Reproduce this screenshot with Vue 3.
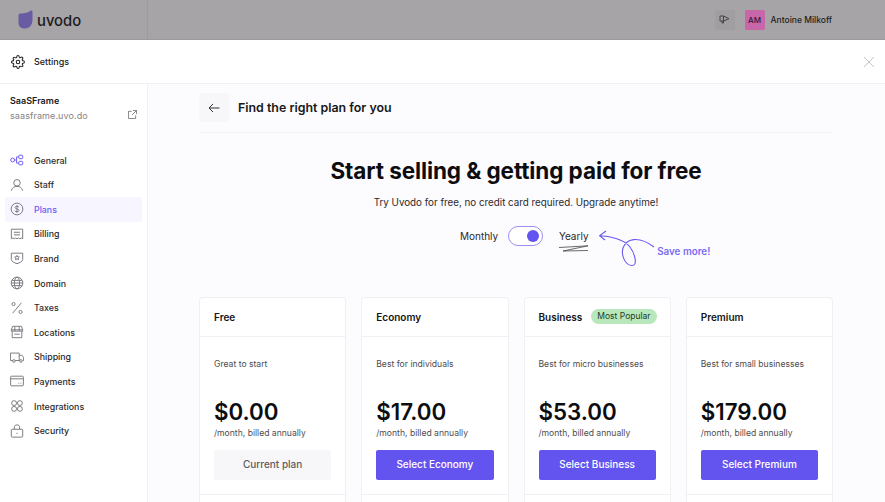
<template>
  <div class="page">
    <header class="topbar">
      <div class="brand">
        <svg width="15" height="19" viewBox="0 0 15 19"><path d="M.5 5.500C.5 4 1.500 3.500 3 3.500 7 3.500 10 2.500 12.500.8 13.500.2 14.500.5 14.500 2V10C14.500 15 11 18.500 7 18.500 3 18.500.5 16.500.5 13Z" fill="#6a5ca3" /></svg>
        <span class="brand-name">uvodo</span>
      </div>
      <div class="top-right">
        <div class="announce">
          <svg width="11" height="9" viewBox="0 0 11 9" fill="none" stroke="#47454a" stroke-width="1"><path d="M1 1h3.500l5.500 2.700-5.500 2.300H1zM3 6v2h1.500V6M4.500 1v5" /></svg>
        </div>
        <div class="avatar">AM</div>
        <span class="user">Antoine Milkoff</span>
      </div>
    </header>

    <div class="settings-head">
      <svg class="gear" width="14" height="14" viewBox="0 0 24 24" fill="none" stroke="#222" stroke-width="1.800"><circle cx="12" cy="12" r="3" /><path d="M19.400 15a1.650 1.650 0 0 0 .33 1.820l.06.06a2 2 0 0 1 0 2.830 2 2 0 0 1-2.830 0l-.06-.06a1.650 1.650 0 0 0-1.820-.33 1.650 1.650 0 0 0-1 1.510V21a2 2 0 0 1-2 2 2 2 0 0 1-2-2v-.09A1.650 1.650 0 0 0 9 19.400a1.650 1.650 0 0 0-1.820.33l-.06.06a2 2 0 0 1-2.830 0 2 2 0 0 1 0-2.830l.06-.06a1.650 1.650 0 0 0 .33-1.820 1.650 1.650 0 0 0-1.510-1H3a2 2 0 0 1-2-2 2 2 0 0 1 2-2h.09A1.650 1.650 0 0 0 4.600 9a1.650 1.650 0 0 0-.33-1.820l-.06-.06a2 2 0 0 1 0-2.830 2 2 0 0 1 2.830 0l.06.06a1.650 1.650 0 0 0 1.820.33H9a1.650 1.650 0 0 0 1-1.510V3a2 2 0 0 1 2-2 2 2 0 0 1 2 2v.09a1.650 1.650 0 0 0 1 1.510 1.650 1.650 0 0 0 1.820-.33l.06-.06a2 2 0 0 1 2.830 0 2 2 0 0 1 0 2.830l-.06.06a1.650 1.650 0 0 0-.33 1.820V9a1.650 1.650 0 0 0 1.510 1H21a2 2 0 0 1 2 2 2 2 0 0 1-2 2h-.09a1.650 1.650 0 0 0-1.510 1z" /></svg>
      <span class="settings-title">Settings</span>
      <svg class="close" width="10" height="10" viewBox="0 0 10 10" stroke="#c4c4c6" stroke-width="1"><path d="M0 0 10 10M10 0 0 10" /></svg>
    </div>

    <div class="body">
      <aside class="sidebar">
        <div class="site">
          <div>
            <div class="site-name">SaaSFrame</div>
            <div class="site-url">saasframe.uvo.do</div>
          </div>
          <svg class="site-link" width="9" height="9" viewBox="0 0 10 10" fill="none" stroke="#6b696f" stroke-width=".9"><path d="M4 1.500H.5v8h8V6M5.500.5h4v4M9.500.5 4.500 5.500" /></svg>
        </div>
        <nav class="nav">
          <a v-for="item in nav" :key="item.label" class="nav-item" :class="{ active: item.label === 'Plans' }">
            <svg width="14" height="14" viewBox="0 0 16 16" fill="none" :stroke="item.label === 'General' ? '#6a5af0' : '#7b797f'" stroke-width="1.100" v-html="item.icon"></svg>
            <span>{{ item.label }}</span>
          </a>
        </nav>
      </aside>

      <main class="main">
        <div class="plan-head">
          <button class="back">
            <svg width="12" height="10" viewBox="0 0 13 11" fill="none" stroke="#333" stroke-width="1.100"><path d="M12.500 5.500H1M5.500 1 1 5.500 5.500 10" /></svg>
          </button>
          <h2>Find the right plan for you</h2>
        </div>

        <section class="hero">
          <h1>Start selling &amp; getting paid for free</h1>
          <p>Try Uvodo for free, no credit card required. Upgrade anytime!</p>
          <div class="billing">
            <span class="opt">Monthly</span>
            <div class="toggle"><i></i></div>
            <div class="yearly">
              <span class="opt">Yearly</span>
              <svg width="31" height="7" viewBox="0 0 31 7" fill="none" stroke="#444" stroke-width=".8"><path d="M1 2.500 30 .8 5 6 30 5.500" /></svg>
            </div>
            <div class="save">
              <svg width="56" height="37" viewBox="0 0 56 37" fill="none" stroke="#6a5af0" stroke-width="1.100"><path d="M.5 5.700C10 6 25 9 31 17 36 24 39 35.500 33 35.500 26 35.500 22 25 24 18 27 9 39 5 55 17M7 1 .5 5.700 6 10" /></svg>
              <span class="save-text">Save more!</span>
            </div>
          </div>
        </section>

        <section class="plans">
          <article v-for="plan in plans" :key="plan.name" class="card">
            <div class="card-head">
              <span class="plan-name">{{ plan.name }}</span>
              <span v-if="plan.popular" class="badge">Most Popular</span>
            </div>
            <div class="card-body">
              <div class="desc">{{ plan.desc }}</div>
              <div class="price">{{ plan.price }}</div>
              <div class="period">/month, billed annually</div>
              <button class="cta" :class="{ current: plan.current }">{{ plan.cta }}</button>
            </div>
          </article>
        </section>
      </main>
    </div>
  </div>
</template>

<script setup>
const nav = [
  { label: 'General', icon: '<circle cx="3" cy="8" r="2.200"/><rect x="10" y="2.500" width="4.500" height="4" rx="1"/><rect x="10" y="9.500" width="4.500" height="4" rx="1"/><path d="M5.200 8h2.300V4.500H10M7.500 8v3.500H10"/>' },
  { label: 'Staff', icon: '<circle cx="8" cy="5.500" r="3.700"/><path d="M1.500 14.500C2.500 11 5 9.500 8 9.500s5.500 1.500 6.500 5"/>' },
  { label: 'Plans', icon: '<circle cx="8" cy="8" r="6.700"/><path d="M10.200 6c-.5-1.300-4.200-1.700-4.500.2-.3 2 4.700 1.400 4.600 3.500-.1 1.800-4.200 1.700-4.800.1M8 3.600v8.800"/>' },
  { label: 'Billing', icon: '<path d="M1.500 2.500h13v11l-1.600-1-1.600 1-1.600-1-1.700 1-1.600-1-1.600 1-1.600-1-1.600 1z"/><path d="M4.500 6h7M4.500 9h7"/>' },
  { label: 'Brand', icon: '<path d="M1.500 2.500h13v7c0 2.500-3.500 4-6.500 5-3-1-6.500-2.500-6.500-5z"/><path d="M8 5l.8 1.700 1.800.2-1.300 1.200.4 1.800L8 9l-1.700.9.400-1.800-1.300-1.200 1.800-.2z"/>' },
  { label: 'Domain', icon: '<circle cx="8" cy="8" r="6.700"/><ellipse cx="8" cy="8" rx="3" ry="6.700"/><path d="M1.300 8h13.400M2.300 5h11.400M2.300 11h11.400"/>' },
  { label: 'Taxes', icon: '<circle cx="4" cy="3.500" r="1.800"/><circle cx="12" cy="12.500" r="1.800"/><path d="M13 2 3 14"/>' },
  { label: 'Locations', icon: '<path d="M3 1.500h10l1.500 4v1.500h-13V5.500zM2.500 7v7.500h11V7M1.500 5.500h13M5.500 2v5M10.500 2v5M5 10.500h6"/>' },
  { label: 'Shipping', icon: '<path d="M3 12H.5V3.500h10V12H6M10.500 6h3l2 2.500V12h-1M10.500 12h.5"/><circle cx="4.500" cy="12.500" r="1.500"/><circle cx="12.500" cy="12.500" r="1.500"/>' },
  { label: 'Payments', icon: '<rect x=".7" y="2.500" width="14.600" height="11" rx="1"/><path d="M.7 5.500h14.600M9.500 10.500h1M12 10.500h1"/>' },
  { label: 'Integrations', icon: '<circle cx="4.700" cy="4.700" r="2.800"/><circle cx="11.300" cy="4.700" r="2.800"/><circle cx="4.700" cy="11.300" r="2.800"/><circle cx="11.300" cy="11.300" r="2.800"/>' },
  { label: 'Security', icon: '<rect x="1.500" y="6" width="13" height="9" rx="1"/><path d="M5 6V3.500C5 2 6.500 1 8 1s3 1 3 2.500V6M8 10v1.500"/>' }
]

const plans = [
  { name: 'Free', desc: 'Great to start', price: '$0.00', cta: 'Current plan', current: true },
  { name: 'Economy', desc: 'Best for individuals', price: '$17.00', cta: 'Select Economy' },
  { name: 'Business', desc: 'Best for micro businesses', price: '$53.00', cta: 'Select Business', popular: true },
  { name: 'Premium', desc: 'Best for small businesses', price: '$179.00', cta: 'Select Premium' }
]
</script>

<style>
html, body { margin: 0; overflow: hidden; }
</style>

<style scoped>
.page {
  width: 885px;
  height: 502px;
  overflow: hidden;
  font-family: Inter, "Liberation Sans", sans-serif;
  color: #111;
  background: #fff;
}

.topbar {
  height: 39px;
  background: #a6a4a7;
  border-bottom: 1px solid #9b999c;
  display: flex;
  align-items: center;
  justify-content: space-between;
}
.brand {
  width: 148px;
  height: 39px;
  box-sizing: border-box;
  border-right: 1px solid #9c9a9d;
  padding-left: 18px;
  display: flex;
  align-items: center;
  gap: 4px;
}
.brand-name { font-size: 14.800px; font-weight: 500; color: #1c1b1d; margin-top: 2px; }
.top-right { display: flex; align-items: center; padding-right: 53px; }
.announce {
  width: 20px;
  height: 20px;
  background: #a09ea1;
  border-radius: 2px;
  display: flex;
  align-items: center;
  justify-content: center;
  margin-right: 10px;
}
.avatar {
  width: 20px;
  height: 20px;
  background: #c766a8;
  color: #3a1a33;
  border-radius: 2px;
  font-size: 8px;
  font-weight: 500;
  display: flex;
  align-items: center;
  justify-content: center;
  margin-right: 6px;
}
.user { font-size: 8.500px; font-weight: 500; color: #1f1e20; }

.settings-head {
  height: 43px;
  border-bottom: 1px solid #f0eff2;
  display: flex;
  align-items: center;
  padding: 0 11px;
  gap: 9px;
}
.settings-title { font-size: 9px; font-weight: 500; color: #222; }
.close { margin-left: auto; }

.body { display: flex; height: 419px; }
.sidebar {
  width: 148px;
  flex: none;
  box-sizing: border-box;
  border-right: 1px solid #f1eff5;
  background: #fff;
}
.site {
  display: flex;
  justify-content: space-between;
  align-items: flex-end;
  padding: 0 10px 0;
  height: 37px;
}
.site-link { margin-bottom: 2px; }
.site-name { font-size: 9px; font-weight: 600; line-height: 11px; color: #1a1a1c; }
.site-url { font-size: 9px; line-height: 11px; margin-top: 4px; color: #85838a; letter-spacing: .1px; }
.nav { margin-top: 26.800px; display: flex; flex-direction: column; padding: 0 5px; }
.nav-item {
  height: 24.600px;
  display: flex;
  align-items: center;
  gap: 10px;
  padding-left: 5px;
  font-size: 8.800px;
  font-weight: 500;
  color: #2a292c;
  border-radius: 2px;
}
.nav-item.active { background: #f7f5ff; color: #6a5af0; }

.main {
  flex: 1;
  background: #fcfbfe;
  padding: 9px 52px 0 51px;
  box-sizing: border-box;
  min-width: 0;
}
.plan-head {
  display: flex;
  align-items: center;
  gap: 9px;
  height: 29px;
  padding-bottom: 10px;
  border-bottom: 1px solid #f2f1f4;
}
.back {
  width: 30px;
  height: 29px;
  border: none;
  background: #f7f6f8;
  border-radius: 2px;
  padding: 0;
  display: flex;
  align-items: center;
  justify-content: center;
}
.plan-head h2 { margin: 0; font-size: 12.400px; font-weight: 600; color: #18181a; }

.hero { text-align: center; padding-top: 23px; }
.hero h1 { margin: 0; font-size: 22.500px; line-height: 30px; font-weight: 700; color: #0d0d0f; letter-spacing: -.1px; }
.hero p { margin: 10px 0 0; font-size: 9.800px; line-height: 13px; color: #2b2a2d; }
.billing {
  display: flex;
  align-items: flex-start;
  padding-left: 261px;
  margin-top: 17px;
  height: 50px;
}
.opt { font-size: 10px; line-height: 20px; color: #2b2a2d; }
.toggle {
  width: 35px;
  height: 20px;
  box-sizing: border-box;
  border: 1px solid #9a8ff5;
  border-radius: 10px;
  background: #fff;
  margin: 0 15px 0 10px;
  display: flex;
  align-items: center;
  justify-content: flex-end;
  padding-right: 3px;
}
.toggle i { width: 12px; height: 12px; border-radius: 50%; background: #6454ef; }
.yearly { display: flex; flex-direction: column; width: 31px; }
.yearly svg { margin-top: -1px; }
.save { display: flex; align-items: flex-start; margin-left: 10px; }
.save svg { margin-top: 4px; flex: none; }
.save-text { font-size: 9.800px; font-weight: 600; color: #7a6cf2; margin-top: 19px; line-height: 14px; margin-left: 2px; white-space: nowrap; }

.plans { display: grid; grid-template-columns: repeat(4, 1fr); gap: 15px; margin-top: 21px; }
.card {
  background: #fff;
  border: 1px solid #f0eff3;
  border-bottom: none;
  border-radius: 4px 4px 0 0;
  box-sizing: border-box;
  height: 210px;
  min-width: 0;
}
.card-head {
  height: 39px;
  box-sizing: border-box;
  border-bottom: 1px solid #f0eff3;
  display: flex;
  align-items: center;
  padding: 0 14px 1px;
  gap: 9px;
}
.plan-name { font-size: 10px; font-weight: 600; color: #151517; }
.badge {
  background: #b8e7bc;
  color: #233a28;
  font-size: 8.500px;
  line-height: 15px;
  padding: 0 6px;
  border-radius: 8px;
  white-space: nowrap;
}
.card-body {
  padding: 0 14px;
  height: 158px;
  box-sizing: border-box;
  border-bottom: 1px solid #f0eff3;
}
.desc { font-size: 8.600px; line-height: 12px; color: #4d4c50; padding-top: 21px; }
.price { font-size: 22.300px; line-height: 28px; font-weight: 600; color: #0d0d0f; margin-top: 28px; }
.period { font-size: 8.600px; line-height: 12px; color: #4d4c50; margin-top: 1px; }
.cta {
  display: block;
  width: 100%;
  height: 30px;
  margin-top: 11px;
  border: none;
  border-radius: 2px;
  background: #6454ef;
  color: #fff;
  font-family: inherit;
  font-size: 10px;
  font-weight: 500;
  padding: 0 0 2px;
}
.cta.current { background: #f7f6f8; color: #5d5c60; }
</style>
